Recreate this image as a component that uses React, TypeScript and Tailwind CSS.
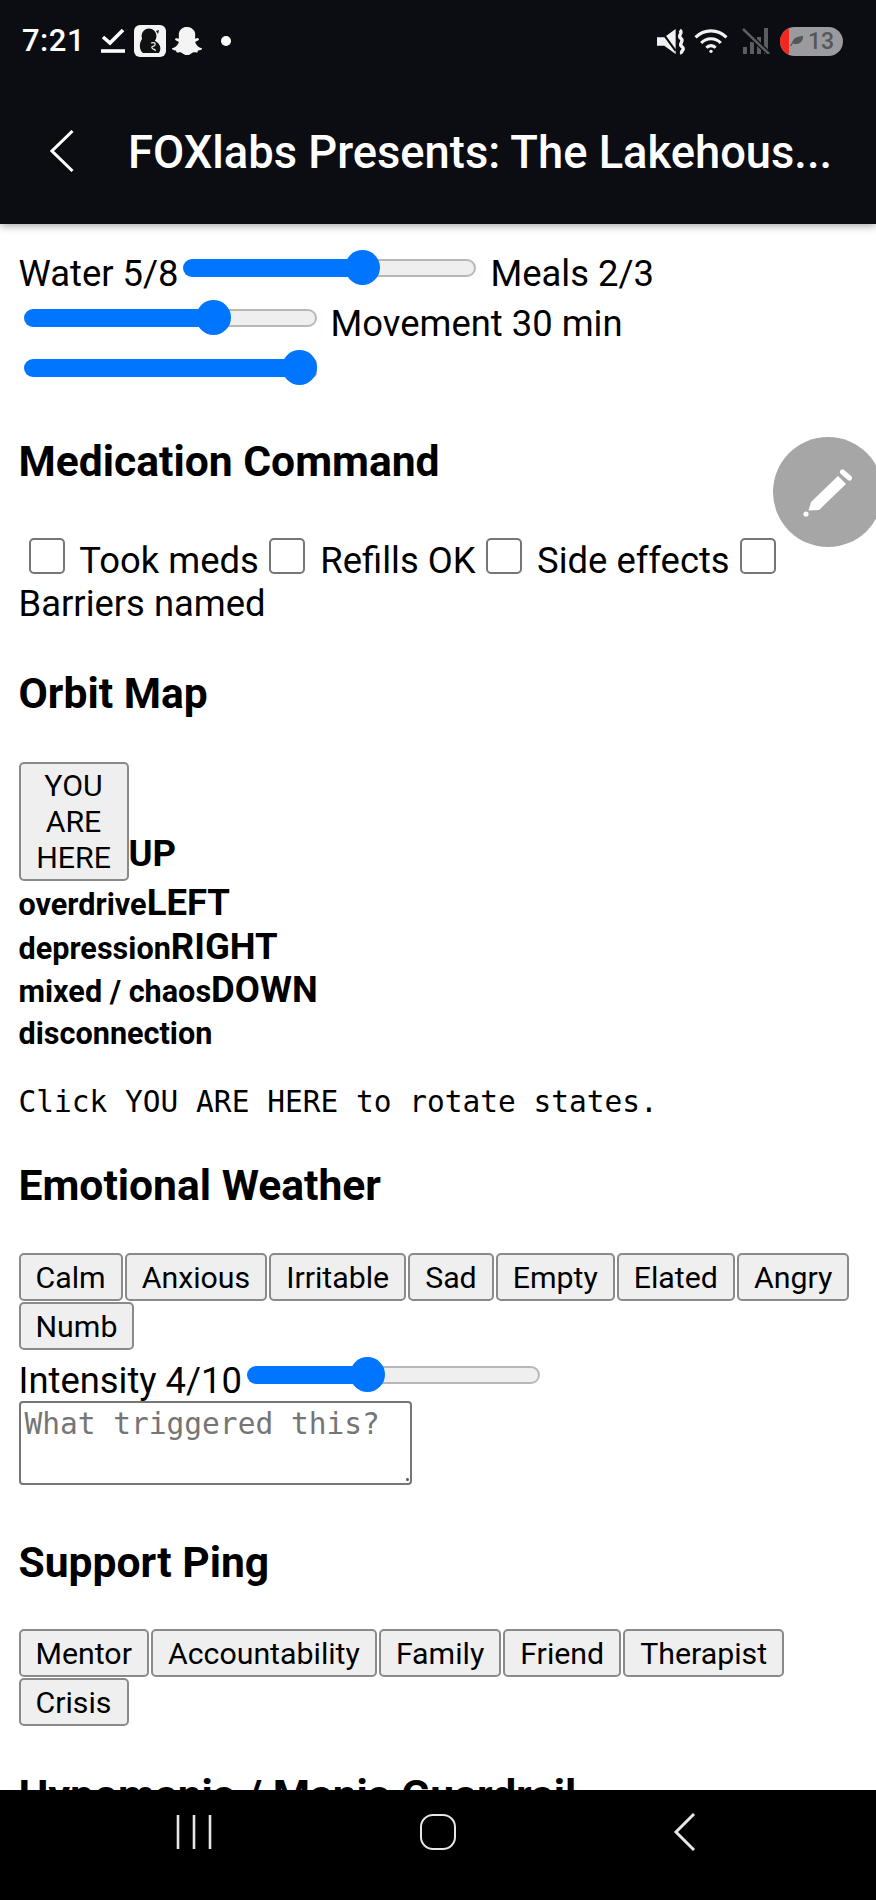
import { FaSnapchatGhost } from "react-icons/fa";

const moods = ["Calm", "Anxious", "Irritable", "Sad", "Empty", "Elated", "Angry", "Numb"];
const people = ["Mentor", "Accountability", "Family", "Friend", "Therapist", "Crisis"];
const checks = ["Took meds", "Refills OK", "Side effects", "Barriers named"];

function Slider({ value, max }: { value: number; max: number }) {
  const travel = (value / max) * 258;
  return (
    <span className="inline-flex align-top mt-[1px] mx-[5px] w-[293px] h-[35px] items-center">
      <span className="h-[18px] bg-[#0075ff] rounded-l-full shrink-0" style={{ width: travel + 4 }} />
      <span className="w-[35px] h-[35px] rounded-full bg-[#0075ff] shrink-0 -ml-[4px] -mr-[4px] relative" />
      <span className="h-[18px] flex-1 bg-[#efefef] border-2 border-[#b8b8b8] rounded-r-full min-w-0" />
    </span>
  );
}

function ChipRow({ items }: { items: string[] }) {
  return (
    <div className="flex flex-wrap gap-x-[2px] gap-y-[1px]">
      {items.map((item) => (
        <button key={item} className="h-[48px] px-[15px] bg-[#efefef] border-2 border-[#8a8a8a] rounded-[5px] text-[30.3px] text-black">
          {item}
        </button>
      ))}
    </div>
  );
}

function Heading({ children, className }: { children: string; className: string }) {
  return <h3 className={"text-[42.6px] leading-[53px] font-bold text-black whitespace-nowrap " + className}>{children}</h3>;
}

function StatusBar() {
  return (
    <div className="h-[82px] flex items-center pl-[22px] pr-[33px] text-white">
      <span className="text-[31px] font-medium tracking-[0.5px]">7:21</span>
      <svg className="ml-[16px]" width="24" height="26" viewBox="0 0 24 26" fill="none" stroke="#fff">
        <polyline points="2,9 9,15 22,2" strokeWidth="3.6" />
        <line x1="0" y1="23" x2="24" y2="23" strokeWidth="3.6" />
      </svg>
      <svg className="ml-[9px]" width="32" height="32" viewBox="0 0 32 32">
        <rect width="32" height="32" rx="6" fill="#f4f4f4" />
        <circle cx="15" cy="11" r="7.5" fill="#111" />
        <path d="M8 14c-3 4-3 11 1 14h16c2-3 2-7-1-10-3-2-5-4-6-6z" fill="#111" />
        <path d="M17 18c3-1 5 0 4 2s-4 1-3 3 4 1 3 3" fill="none" stroke="#eee" strokeWidth="1.2" />
        <path d="M22 6l3-1-1 4z" fill="#111" />
      </svg>
      <FaSnapchatGhost className="ml-[6px]" size={30} color="#f4f4f4" />
      <span className="ml-[19px] w-[10px] h-[10px] rounded-full bg-white" />

      <svg className="ml-auto" width="29" height="27" viewBox="0 0 28 26" fill="none">
        <path d="M0 9h7l11-8v24l-11-8H0z" fill="#f2f2f2" />
        <line x1="2" y1="0" x2="18" y2="22" stroke="#0b0d12" strokeWidth="2" />
        <path d="M22 2c4 3-3 5 1 8s-3 5 1 8-2 4 0 7" stroke="#f2f2f2" strokeWidth="3.2" />
      </svg>
      <svg className="ml-[8px]" width="34" height="26" viewBox="0 0 33 25" fill="none" stroke="#f2f2f2" strokeWidth="3">
        <path d="M1.5 9a21 21 0 0 1 30 0" />
        <path d="M7 14.5a13 13 0 0 1 19 0" />
        <path d="M12 19a6 6 0 0 1 9 0" />
        <circle cx="16.5" cy="22.5" r="1.6" fill="#f2f2f2" strokeWidth="0" />
      </svg>
      <svg className="ml-[14px]" width="28" height="26" viewBox="0 0 28 26" fill="#5c5d61">
        <rect x="1" y="19" width="4" height="7" />
        <rect x="8" y="14" width="4" height="12" />
        <rect x="15" y="9" width="4" height="17" />
        <rect x="22" y="0" width="4" height="26" />
        <line x1="1" y1="1" x2="27" y2="26" stroke="#0b0d12" strokeWidth="5" />
        <line x1="1" y1="1" x2="27" y2="26" stroke="#5c5d61" strokeWidth="2.6" />
      </svg>
      <span className="ml-[10px] w-[63px] h-[29px] rounded-full bg-[#9b9b9f] overflow-hidden flex items-center">
        <span className="w-[9px] h-full bg-[#f0281e] rounded-r-[4px]" />
        <svg className="-ml-[1px]" width="17" height="15" viewBox="0 0 20 18" fill="#55565a">
          <path d="M5 10C6 4 12 3 18 2c0 6-3 10-9 10-1 0-2 0-3-1l-3 4-1-1z" />
        </svg>
        <span className="ml-[3px] text-[23px] leading-none font-medium text-[#55565a]">13</span>
      </span>
    </div>
  );
}

function TitleBar() {
  return (
    <div className="h-[142px] flex items-start pt-[48px] pl-[50px] text-white">
      <svg width="24" height="42" viewBox="0 0 24 42" fill="none" stroke="#fff" strokeWidth="3">
        <polyline points="22.5,1 2,21 22.5,41" />
      </svg>
      <span className="ml-[54px] text-[45.3px] leading-[46px] font-medium whitespace-nowrap">FOXlabs Presents: The Lakehous...</span>
    </div>
  );
}

function NavBar() {
  return (
    <div className="h-[110px] bg-black flex items-center shrink-0 z-10 pb-[28px] pt-[2px]">
      <svg className="ml-[175px]" width="38" height="36" viewBox="0 0 38 36" stroke="#e6e6e6" strokeWidth="2.6">
        <line x1="3" y1="1" x2="3" y2="35" />
        <line x1="19" y1="1" x2="19" y2="35" />
        <line x1="35" y1="1" x2="35" y2="35" />
      </svg>
      <span className="ml-[207px] w-[36px] h-[36px] rounded-[13px] border-[2.5px] border-[#e6e6e6]" />
      <svg className="ml-[217px]" width="23" height="38" viewBox="0 0 23 38" fill="none" stroke="#e6e6e6" strokeWidth="3">
        <polyline points="21,1 3,19 21,37" />
      </svg>
    </div>
  );
}

export default function App() {
  return (
    <div className="relative w-[876px] h-[1900px] flex flex-col overflow-hidden bg-white text-black font-['Roboto',sans-serif]">
      <header className="h-[224px] shrink-0 bg-[#0b0d12] shadow-[0_2px_8px_rgba(0,0,0,0.35)] z-10">
        <StatusBar />
        <TitleBar />
      </header>

      <main className="flex-1 min-h-0 overflow-hidden px-[18.5px] pt-[25px]">
        <div className="text-[36.4px] leading-[50px]">
          Water 5/8<Slider value={5} max={8} /> Meals 2/3 <Slider value={2} max={3} /> Movement 30 min <Slider value={30} max={30} />
        </div>

        <Heading className="mt-[36px]">Medication Command</Heading>
        <div className="mt-[50px] text-[36.4px] leading-[43px]">
          {checks.map((label) => (
            <span key={label}>
              <input type="checkbox" className="appearance-none inline-block align-[-1px] w-[36px] h-[36px] ml-[10px] mr-[6.5px] bg-white border-2 border-[#767676] rounded-[5px]" />{" "}
              {label}
            </span>
          ))}
        </div>

        <Heading className="mt-[42px]">Orbit Map</Heading>
        <div className="mt-[42px] flex items-end">
          <button className="w-[110px] h-[119px] bg-[#efefef] border-2 border-[#8a8a8a] rounded-[5px] text-[30.3px] leading-[36px] text-black">
            YOU ARE HERE
          </button>
          <strong className="text-[36.5px] leading-[43px] mb-[6px]">UP</strong>
        </div>
        <div className="font-bold text-[36.5px] leading-[43px]">
          <div className="h-[43.5px]"><span className="text-[30.6px]">overdrive</span>LEFT</div>
          <div className="h-[43.5px]"><span className="text-[30.6px]">depression</span>RIGHT</div>
          <div className="h-[43.5px]"><span className="text-[30.6px]">mixed / chaos</span>DOWN</div>
          <div className="h-[43.5px] text-[30.6px]">disconnection</div>
        </div>
        <p className="mt-[29px] font-['DejaVu_Sans_Mono',monospace] text-[29.5px] leading-[36px]">Click YOU ARE HERE to rotate states.</p>

        <Heading className="mt-[39px]">Emotional Weather</Heading>
        <div className="mt-[41px]">
          <ChipRow items={moods} />
        </div>
        <div className="mt-[6px] text-[36.4px] leading-[50px]">
          Intensity 4/10<Slider value={4} max={10} />
        </div>
        <div className="relative w-[393px] -mt-[5px]">
          <textarea
            placeholder="What triggered this?"
            className="block w-[393px] h-[84px] px-[4px] py-[3px] resize-none border-2 border-[#767676] rounded-[4px] bg-white font-['DejaVu_Sans_Mono',monospace] text-[29.5px] leading-[36px] placeholder:text-[#757575]"
          />
          <span className="absolute right-[3px] bottom-[4px] w-[3px] h-[3px] rounded-full bg-[#555]" />
        </div>

        <Heading className="mt-[51px]">Support Ping</Heading>
        <div className="mt-[40px]">
          <ChipRow items={people} />
        </div>

        <Heading className="mt-[43px]">Hypomania / Mania Guardrail</Heading>
      </main>

      <NavBar />

      <button className="absolute left-[773px] top-[437px] w-[110px] h-[110px] rounded-full bg-[#a6a6a6] flex items-center justify-center">
        <svg width="50" height="50" viewBox="0 0 50 50" fill="#fff">
          <polygon points="5.5,43.5 8,35 35,9 43,17 16,43" />
          <line x1="39.5" y1="5" x2="46.5" y2="11" stroke="#fff" strokeWidth="5" strokeLinecap="round" />
          <circle cx="3" cy="47" r="2.6" />
        </svg>
      </button>
    </div>
  );
}
